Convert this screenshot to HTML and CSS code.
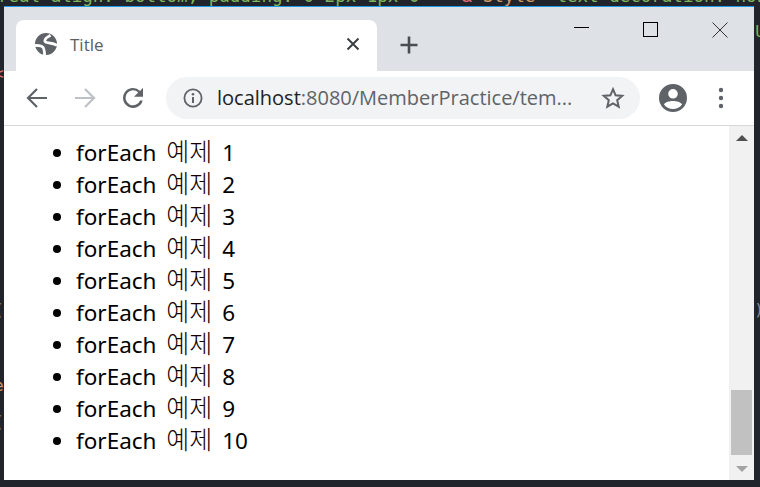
FILE: index.html
```html
<!DOCTYPE html>
<html lang="ko">
<head>
<meta charset="utf-8">
<title>Title</title>
<link rel="stylesheet" href="styles.css">
</head>
<body>
<div class="backdrop">
  <div class="code-line"><span class="c-green">real-align: bottom; padding: 0 2px 1px 0</span>  <span class="c-red">"</span> <span class="c-red">&amp;</span> <span class="c-orange">Style</span>  <span class="c-green">text-decoration: none</span></div>
  <span class="mark mark-a">&lt;</span>
  <span class="mark mark-b">(</span>
  <span class="mark mark-c">e</span>
  <span class="mark mark-d">(</span>
  <span class="mark mark-e">U</span>
  <span class="mark mark-f">)</span>
</div>
<div class="window">
  <header class="titlebar">
    <div class="tab">
      <svg class="favicon" viewBox="0 0 24 24"><circle cx="12" cy="12" r="12" fill="#5f6368"/><path d="M17 2.500C12 5 10 7 11 9.500C12 11.500 18 10 24 13.500M0 13.500C5 13.500 9 14.500 9.500 17C10 19 10.500 21 10.500 24" stroke="#fff" stroke-width="3" fill="none"/></svg>
      <span class="tab-title">Title</span>
      <svg class="tab-close" viewBox="0 0 14 14"><path d="M1.500 1.500l11 11M12.500 1.500l-11 11" stroke="#3c4043" stroke-width="2" fill="none"/></svg>
    </div>
    <svg class="new-tab" viewBox="0 0 18 18"><path d="M9 .5v17M.5 9h17" stroke="#494c50" stroke-width="2.600" fill="none"/></svg>
    <div class="win-controls">
      <span class="win-btn"><svg viewBox="0 0 16 16" class="win-ico"><path d="M0 5.500h15" stroke="#000" fill="none"/></svg></span>
      <span class="win-btn"><svg viewBox="0 0 16 16" class="win-ico"><rect x=".5" y=".5" width="14" height="14" stroke="#000" fill="none"/></svg></span>
      <span class="win-btn"><svg viewBox="0 0 16 16" class="win-ico"><path d="M.5 .5l15 15M15.500 .5l-15 15" stroke="#333" fill="none"/></svg></span>
    </div>
  </header>
  <nav class="toolbar">
    <svg class="nav-ico" viewBox="0 0 24 24"><path d="M22 12H3M12 3l-9 9 9 9" stroke="#5f6368" stroke-width="2.200" fill="none"/></svg>
    <svg class="nav-ico" viewBox="0 0 24 24"><path d="M2 12h19M12 3l9 9-9 9" stroke="#bdc1c6" stroke-width="2.200" fill="none"/></svg>
    <svg class="nav-ico" viewBox="0 0 24 24"><path fill="#5f6368" d="M19.100 4.900A10 10 0 1 0 21.700 14.500h-2.600a7.500 7.500 0 1 1-1.800-8.100L13 10.800h9V1.700z"/></svg>
    <div class="omnibox">
      <svg class="info" viewBox="0 0 20 20"><circle cx="10" cy="10" r="8.600" stroke="#5f6368" stroke-width="1.800" fill="none"/><path d="M10 9v6" stroke="#5f6368" stroke-width="2"/><circle cx="10" cy="6.200" r="1.300" fill="#5f6368"/></svg>
      <span class="url"><span class="url-host">localhost</span>:8080/MemberPractice/tem...</span>
      <svg class="star" viewBox="0 0 24 24"><path d="M12 3.200l2.600 6.100 6.600.6-5 4.300 1.500 6.500-5.700-3.400-5.700 3.400 1.500-6.500-5-4.300 6.600-.6z" stroke="#5f6368" stroke-width="2" fill="none"/></svg>
    </div>
    <svg class="avatar" viewBox="0 0 28 28"><path fill="#5f6368" d="M14 0a14 14 0 1 0 0 28 14 14 0 0 0 0-28zm0 5a4.800 4.800 0 1 1 0 9.600A4.800 4.800 0 0 1 14 5zm0 20c-3.700 0-7-1.800-9-4.600 1-2.200 5.800-3.400 9-3.400s8 1.200 9 3.400c-2 2.800-5.300 4.600-9 4.600z"/></svg>
    <svg class="menu" viewBox="0 0 6 24"><circle cx="3" cy="4" r="2.200" fill="#5f6368"/><circle cx="3" cy="12" r="2.200" fill="#5f6368"/><circle cx="3" cy="20" r="2.200" fill="#5f6368"/></svg>
  </nav>
  <main class="viewport">
    <div class="content">
      <ul class="list">
        <li>forEach <span class="ko">예제</span> 1</li>
        <li>forEach <span class="ko">예제</span> 2</li>
        <li>forEach <span class="ko">예제</span> 3</li>
        <li>forEach <span class="ko">예제</span> 4</li>
        <li>forEach <span class="ko">예제</span> 5</li>
        <li>forEach <span class="ko">예제</span> 6</li>
        <li>forEach <span class="ko">예제</span> 7</li>
        <li>forEach <span class="ko">예제</span> 8</li>
        <li>forEach <span class="ko">예제</span> 9</li>
        <li>forEach <span class="ko">예제</span> 10</li>
      </ul>
    </div>
    <div class="scrollbar">
      <span class="arrow-up"></span>
      <div class="track"><div class="thumb"></div></div>
      <span class="arrow-down"></span>
    </div>
  </main>
</div>
</body>
</html>
```

FILE: styles.css
```css
* { box-sizing: border-box; }
html, body { margin: 0; height: 100%; overflow: hidden; }
body {
  background: #21252b;
  padding: 6px 6px 7px 4px;
  font-family: "Noto Sans", "Noto Sans CJK KR", sans-serif;
}
.backdrop { position: absolute; inset: 0; overflow: hidden; font-family: "DejaVu Sans Mono", monospace; font-size: 17.500px; }
.code-line { position: absolute; left: -2px; top: -14px; white-space: pre; }
.c-green { color: #7fb55c; }
.c-red { color: #e06c75; }
.c-orange { color: #d19a66; }
.mark { position: absolute; left: -6px; font-size: 16px; }
.mark-a { top: 64px; color: #e06c75; }
.mark-b { top: 300px; color: #8a8f98; }
.mark-c { top: 376px; color: #d19a66; }
.mark-d { top: 412px; color: #8a8f98; }
.mark-e { left: auto; right: -5px; top: 22px; color: #7fb55c; }
.mark-f { left: auto; right: -4px; top: 300px; color: #8a8f98; }
.window {
  position: relative;
  display: flex;
  flex-direction: column;
  height: 474px;
  border-top: 1px solid #1e9be8;
  background: #fff;
}
.titlebar {
  display: flex;
  align-items: flex-end;
  height: 64px;
  padding-left: 12px;
  background: #dee1e6;
}
.tab {
  display: flex;
  align-items: center;
  width: 361px;
  height: 51px;
  padding: 0 17px 3px 19px;
  background: #fff;
  border-radius: 8px 8px 0 0;
}
.favicon { width: 22px; height: 22px; }
.tab-title { margin-left: 13px; font-size: 17px; color: #5b5e62; font-family: "Open Sans", sans-serif; }
.tab-close { width: 14px; height: 14px; margin-left: auto; }
.new-tab { width: 18px; height: 18px; margin: 0 0 17px 23px; }
.win-controls { display: flex; margin: 0 0 33px auto; height: 16px; }
.win-btn { display: flex; justify-content: center; width: 69px; }
.win-ico { width: 16px; height: 16px; }
.toolbar {
  display: flex;
  align-items: center;
  height: 55px;
  padding: 0 0 1px 21px;
  border-bottom: 1px solid #d8d8d8;
}
.nav-ico { width: 24px; height: 24px; margin-right: 24px; }
.nav-ico:nth-of-type(3) { margin-right: 21px; }
.omnibox {
  display: flex;
  align-items: center;
  width: 474px;
  height: 42px;
  padding: 0 15px 0 17px;
  border-radius: 21px;
  background: #f1f3f4;
}
.info { width: 20px; height: 20px; }
.url { margin-left: 14px; font-size: 20px; color: #5f6368; white-space: nowrap; font-family: "Open Sans", sans-serif; }
.url-host { color: #202124; }
.star { width: 24px; height: 24px; margin-left: auto; }
.avatar { width: 28px; height: 28px; margin-left: 19px; }
.menu { width: 6px; height: 24px; margin-left: 31px; }
.viewport { flex: 1; display: flex; min-height: 0; }
.content { flex: 1; min-width: 0; }
.list {
  margin: 11px 0 0;
  padding: 0 0 0 72px;
  font-size: 22.500px;
  line-height: 32px;
  word-spacing: 4px;
  color: #000;
}
.list li { white-space: nowrap; }
.ko { font-family: "Noto Sans CJK KR", sans-serif; font-size: 25px; font-weight: 300; line-height: 1; color: #1a0000; }
.scrollbar {
  display: flex;
  flex-direction: column;
  align-items: center;
  width: 25px;
  background: #f1f1f1;
}
.arrow-up {
  width: 0; height: 0; margin-top: 9px;
  border-left: 6px solid transparent;
  border-right: 6px solid transparent;
  border-bottom: 6px solid #505050;
}
.track { flex: 1; width: 100%; display: flex; align-items: flex-end; padding: 0 2px 11px; }
.thumb { width: 100%; height: 65px; background: #c1c1c1; }
.arrow-down {
  width: 0; height: 0; margin-bottom: 8px;
  border-left: 6px solid transparent;
  border-right: 6px solid transparent;
  border-top: 6px solid #a3a3a3;
}
```
